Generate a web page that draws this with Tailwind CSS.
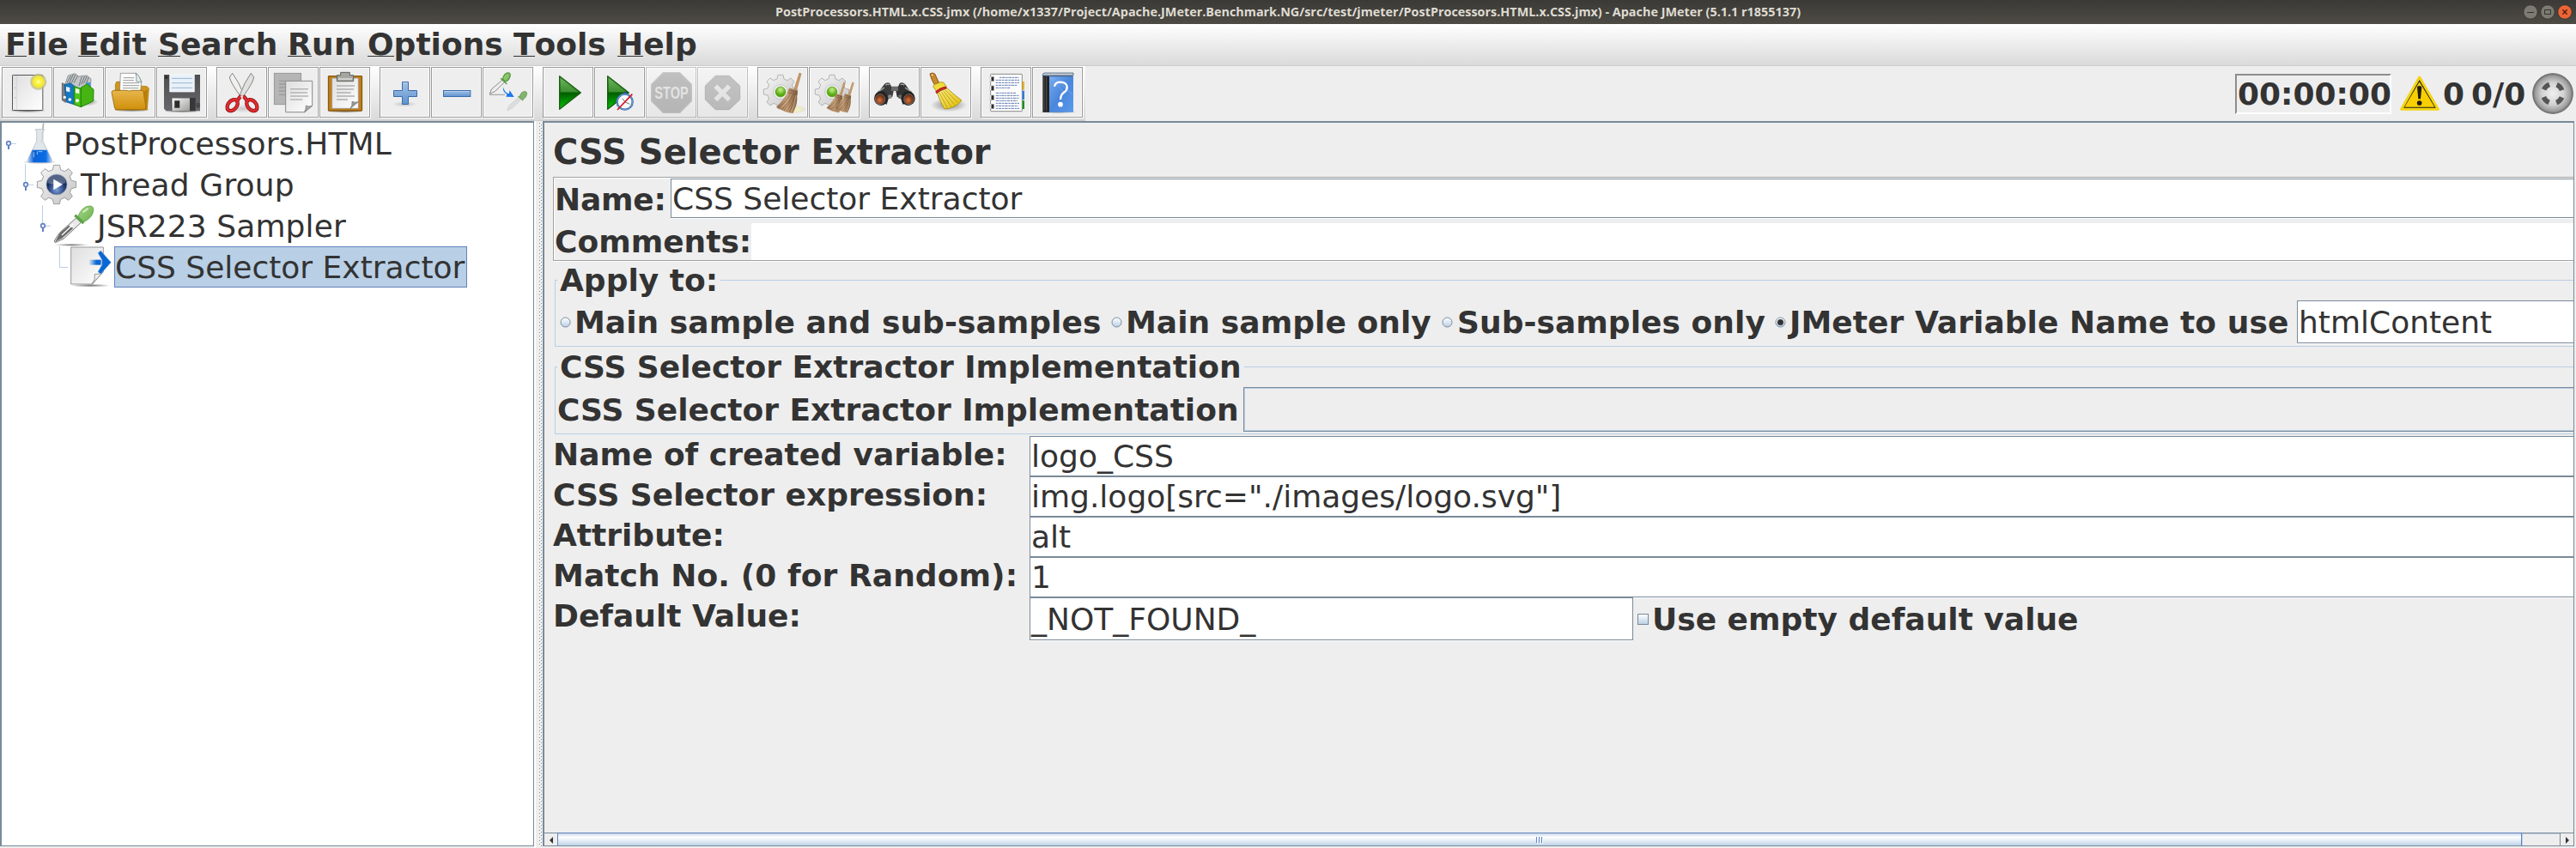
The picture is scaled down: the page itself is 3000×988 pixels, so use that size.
<!DOCTYPE html>
<html lang="en">
<head>
<meta charset="utf-8">
<title>PostProcessors.HTML.x.CSS.jmx - Apache JMeter (5.1.1 r1855137)</title>
<script src="https://cdn.jsdelivr.net/npm/@tailwindcss/browser@4"></script>
</head>
<body class="w-[3000px] h-[988px] overflow-hidden bg-white font-['DejaVu_Sans',sans-serif] text-[36px] leading-[42px] text-[#333333] whitespace-nowrap flex flex-col">
<svg width="0" height="0" class="absolute">
  <defs>
    <linearGradient id="paper" x1="0" y1="0" x2="1" y2="1"><stop offset="0" stop-color="#dedede"/><stop offset="1" stop-color="#fff"/></linearGradient>
    <linearGradient id="folder" x1="0" y1="0" x2="0" y2="1"><stop offset="0" stop-color="#e8b64c"/><stop offset="1" stop-color="#d0900a"/></linearGradient>
    <linearGradient id="floppy" x1="0" y1="0" x2="0" y2="1"><stop offset="0" stop-color="#4d4d4f"/><stop offset="1" stop-color="#68686c"/></linearGradient>
    <linearGradient id="blue" x1="0" y1="0" x2="0" y2="1"><stop offset="0" stop-color="#a5c3e6"/><stop offset="1" stop-color="#5d92d0"/></linearGradient>
    <linearGradient id="play" x1="0" y1="0" x2="0" y2="1"><stop offset="0" stop-color="#5fae4c"/><stop offset=".48" stop-color="#1f7d12"/><stop offset=".5" stop-color="#015c00"/><stop offset="1" stop-color="#00c400"/></linearGradient>
    <linearGradient id="straw" x1="0" y1="0" x2="1" y2="0"><stop offset="0" stop-color="#8d6a4a"/><stop offset=".5" stop-color="#c9a27c"/><stop offset="1" stop-color="#80603f"/></linearGradient>
    <linearGradient id="gear" x1="0" y1="0" x2="1" y2="1"><stop offset="0" stop-color="#f6f6f6"/><stop offset="1" stop-color="#c4c4c4"/></linearGradient>
    <linearGradient id="yellow" x1="0" y1="0" x2="1" y2="1"><stop offset="0" stop-color="#fbf08a"/><stop offset="1" stop-color="#e0b800"/></linearGradient>
    <linearGradient id="metal" x1="0" y1="0" x2="1" y2="1"><stop offset="0" stop-color="#fafafa"/><stop offset="1" stop-color="#9c9c98"/></linearGradient>
    <linearGradient id="liquid" x1="0" y1="0" x2="1" y2="0"><stop offset="0" stop-color="#b4d0f4"/><stop offset=".25" stop-color="#0b62d6"/><stop offset=".75" stop-color="#0a6ce6"/><stop offset="1" stop-color="#b4d0f4"/></linearGradient>
    <linearGradient id="help" x1="0" y1="0" x2="1" y2="1"><stop offset="0" stop-color="#78abee"/><stop offset=".5" stop-color="#4a86dc"/><stop offset="1" stop-color="#5b9bea"/></linearGradient>
    <linearGradient id="arrow" x1="0" y1="0" x2="1" y2="0"><stop offset="0" stop-color="#0a68d4" stop-opacity=".05"/><stop offset=".6" stop-color="#0a68d4"/></linearGradient>
    <linearGradient id="radio" x1="0" y1="0" x2="0" y2="1"><stop offset="0" stop-color="#fff"/><stop offset="1" stop-color="#b8cfe5"/></linearGradient>
    <linearGradient id="green" x1="0" y1="0" x2="1" y2="1"><stop offset="0" stop-color="#a8d68c"/><stop offset="1" stop-color="#6ab04c"/></linearGradient>
    <radialGradient id="sun"><stop offset="0" stop-color="#fffeb0"/><stop offset=".35" stop-color="#fbf230"/><stop offset=".6" stop-color="#efe640"/><stop offset=".85" stop-color="#b5b080" stop-opacity=".7"/><stop offset="1" stop-color="#cccccc" stop-opacity="0"/></radialGradient>
    <radialGradient id="shade"><stop offset="0" stop-color="#000" stop-opacity=".55"/><stop offset="1" stop-color="#000" stop-opacity="0"/></radialGradient>
    <radialGradient id="led" cx=".5" cy=".3"><stop offset="0" stop-color="#c8f08c"/><stop offset="1" stop-color="#55aa0e"/></radialGradient>
    <radialGradient id="lens" cx=".45" cy=".6"><stop offset="0" stop-color="#d8773f"/><stop offset="1" stop-color="#6b2c10"/></radialGradient>
    <radialGradient id="navy" cx=".5" cy=".75"><stop offset="0" stop-color="#7ea0da"/><stop offset=".6" stop-color="#3a5690"/><stop offset="1" stop-color="#122a5a"/></radialGradient>
    <radialGradient id="ball"><stop offset="0" stop-color="#f0f0f0"/><stop offset=".55" stop-color="#d2d2d2"/><stop offset=".88" stop-color="#9c9c9c"/><stop offset="1" stop-color="#6a6a6a"/></radialGradient>
    <path id="cog" d="M-9-59 L9-59 L12-45 Q17-43 24-40 L36-48 L48-36 L40-24 Q43-18 45-12 L59-9 L59 9 L45 12 Q43 18 40 24 L48 36 L36 48 L24 40 Q18 43 12 45 L9 59 L-9 59 L-12 45 Q-18 43 -24 40 L-36 48 L-48 36 L-40 24 Q-43 18 -45 12 L-59 9 L-59-9 L-45-12 Q-43-18 -40-24 L-48-36 L-36-48 L-24-40 Q-18-43 -12-45 Z"/>
    <g id="besom">
      <path d="M303 45 L309 48 L293 104 L285 101 Z" fill="#d19a66" stroke="#8e6238" stroke-width="1.5"/>
      <path d="M268 97 L297 107 Q294 120 295 138 Q294 160 280 186 Q248 182 222 164 Q252 138 268 97 Z" fill="url(#straw)"/>
      <path d="M265 104 L296 114 M262 112 L295 121" stroke="#6d4c30" stroke-width="2"/>
      <path d="M272 118 Q256 148 232 166 M280 120 Q268 156 250 176 M288 121 Q280 160 268 182 M277 120 Q266 150 242 172 M285 120 Q276 158 258 180" stroke="#7b5a3b" stroke-width="2" fill="none"/>
      <path d="M275 120 Q262 150 238 166 M290 124 Q286 160 274 184" stroke="#e2c19b" stroke-width="1.5" fill="none"/>
    </g>
    <pattern id="bumps" width="4" height="4" patternUnits="userSpaceOnUse"><path d="M0 0h1v1h-1zM2 2h1v1h-1z" fill="#7a8a99"/><path d="M1 1h1v1h-1zM3 3h1v1h-1z" fill="#fff"/></pattern>
  </defs>
</svg>

<!-- Window title bar -->
<header class="h-[28px] shrink-0 bg-linear-to-b from-[#3b3a36] to-[#4d4b44] flex items-center relative">
  <div class="w-full text-center font-['Open_Sans',sans-serif] font-bold text-[14.4px] leading-[28px] text-[#dfdbd2]">PostProcessors.HTML.x.CSS.jmx (/home/x1337/Project/Apache.JMeter.Benchmark.NG/src/test/jmeter/PostProcessors.HTML.x.CSS.jmx) - Apache JMeter (5.1.1 r1855137)</div>
  <svg class="absolute left-[2936px] top-0" width="64" height="28" viewBox="1128 0 192 84">
    <g stroke="#2c2b28" stroke-width="2"><circle cx="1161" cy="42" r="24.500" fill="#7c7a72"/><circle cx="1221" cy="42" r="24.500" fill="#7c7a72"/><circle cx="1281" cy="42" r="24.500" fill="#ee6436"/></g>
    <g fill="none" stroke="#32312d" stroke-width="3"><path d="M1149 43.500h24M1210.500 34.500h21v15h-21z"/><path stroke="#4a2010" stroke-width="4" d="M1273 34l16 16M1289 34l-16 16"/></g>
  </svg>
</header>

<!-- Menu bar -->
<nav class="h-[49px] shrink-0 bg-linear-to-b from-white to-[#dadada] border-b border-[#cccccc] font-bold flex pl-[6px] pt-[3px]">
  <div class="w-[85px]"><span class="inline-block h-[35px] border-b border-[#333]">F</span>ile</div>
  <div class="w-[93px]"><span class="inline-block h-[35px] border-b border-[#333]">E</span>dit</div>
  <div class="w-[151px]"><span class="inline-block h-[35px] border-b border-[#333]">S</span>earch</div>
  <div class="w-[93px] tracking-[0.3px]"><span class="inline-block h-[35px] border-b border-[#333]">R</span>un</div>
  <div class="w-[170px]"><span class="inline-block h-[35px] border-b border-[#333]">O</span>ptions</div>
  <div class="w-[121px]"><span class="inline-block h-[35px] border-b border-[#333]">T</span>ools</div>
  <div><span class="inline-block h-[35px] border-b border-[#333]">H</span>elp</div>
</nav>

<!-- Tool bar -->
<section class="h-[64px] shrink-0 bg-[#eeeeee] flex justify-between">
  <div class="w-[1264px] h-[64px] pl-[2px] pt-px flex gap-[11px] bg-linear-to-b from-white to-[#dadada] border-b border-[#cccccc] [&_svg]:w-[59px] [&_svg]:h-[59px] [&_svg]:bg-[#eeeeee] [&_svg]:shadow-[inset_0_0_0_1px_#999,inset_0_0_0_2px_#fafafa,1px_1px_0_#fff]">
    <div class="flex gap-px">
      <svg viewBox="6 24 177 177">
        <ellipse cx="97" cy="177" rx="66" ry="7" fill="url(#shade)"/>
        <rect x="43.500" y="52.500" width="106" height="123" rx="2" fill="url(#paper)" stroke="#555" stroke-width="3"/>
        <path d="M58 54v119" stroke="#cfcfcf" stroke-width="2"/><circle cx="53" cy="97" r="2" fill="#aaa"/><circle cx="53" cy="131" r="2" fill="#aaa"/>
        <circle cx="134" cy="76" r="31" fill="url(#sun)"/>
      </svg>
      <svg viewBox="186 24 177 177">
        <ellipse cx="290" cy="146" rx="54" ry="16" fill="url(#shade)"/>
        <path d="M226 88 L238 54 L262 47 L276 58 L280 56 L304 54 L318 66 L316 96 L230 112 Z" fill="#c3c7ca" stroke="#777" stroke-width="2"/>
        <path d="M234 80l14-26M242 80l14-30M250 80l14-30M258 80l14-26M276 90l10-32M284 86l12-30M292 82l12-26M300 84l10-24" stroke="#6c7175" stroke-width="3"/>
        <path d="M302 78h14v22l-8-4z" fill="#3c9be0"/>
        <path d="M217 80l12 6v62l-12-8z" fill="#7b7f86" stroke="#444" stroke-width="2"/>
        <path d="M225 86 L246 80 L262 92 L262 156 L232 147 Z" fill="#1478c0" stroke="#0a4f88" stroke-width="2"/>
        <path d="M259 92 L283 100 L283 164 L259 155 Z" fill="#4fc21c" stroke="#1d8500" stroke-width="3"/>
        <path d="M283 96 L304 84 L327 103 L326 143 L283 164 Z" fill="#46b514" stroke="#1d8500" stroke-width="3"/>
        <path d="M264 99l13 3v16l-13-3zM231 93l13 3v16l-13-3z" fill="#fff" opacity=".9"/><circle cx="270" cy="142" r="6" fill="#fff"/><circle cx="244" cy="138" r="5.500" fill="#fff"/><circle cx="226" cy="130" r="5" fill="#fff"/>
      </svg>
      <svg viewBox="366 24 177 177">
        <ellipse cx="460" cy="174" rx="66" ry="8" fill="url(#shade)"/>
        <path d="M403 86l4-10 14 0 8 10 84 6 7 6-6 76h-110z" fill="#cf961a" stroke="#a06a00" stroke-width="2"/>
        <path d="M421 46h56l17 28-4 46h-72z" fill="#fcfcfc" stroke="#777" stroke-width="2"/><path d="M474 46q4 14 2 28l18 4q-6-24-20-32z" fill="#e4ecee" stroke="#5a7378" stroke-width="2"/>
        <path d="M431 62h38M430 71h38M429 80h57M429 89h57M429 98h55" stroke="#6a6a6a" stroke-width="2"/>
        <path d="M390 112q2-6 8-6h44q10 4 20 0h34q8 0 6 9l8 50q0 8-8 8h-94q-6 0-8-8z" fill="url(#folder)" stroke="#94690a" stroke-width="2.500"/>
        <path d="M500 114l14-10-4 66" fill="#b97e08" stroke="#94690a" stroke-width="1"/>
      </svg>
      <svg viewBox="546 24 177 177">
        <ellipse cx="637" cy="178" rx="66" ry="7" fill="url(#shade)"/>
        <path d="M573 51h126v127h-118l-8-8z" fill="url(#floppy)"/>
        <path d="M593 51h86v60h-86z" fill="#e9f1f9" stroke="#fff" stroke-width="2"/><path d="M600 64h72M600 80h72M600 97h72" stroke="#8aa9cc" stroke-width="2.500"/><rect x="576" y="56" width="10" height="9" fill="#2b2b2b"/>
        <rect x="599" y="132" width="84" height="46" fill="#38383a"/><rect x="601" y="133" width="62" height="45" fill="url(#metal)"/><rect x="609.500" y="141.500" width="18" height="26" fill="#2c2c2c" stroke="#888"/><ellipse cx="692" cy="158" rx="6" ry="9" fill="#4a4a4c" stroke="#333"/>
      </svg>
    </div>
    <div class="flex gap-px">
      <svg viewBox="756 24 177 177">
        <ellipse cx="848" cy="170" rx="44" ry="14" fill="url(#shade)" opacity=".3"/>
        <path d="M812 46 L802 60 Q806 80 840 126 L852 122 Q836 78 812 46Z" fill="#f0f0ee" stroke="#858585" stroke-width="3"/>
        <path d="M877 46 L887 60 Q884 80 850 126 L838 122 Q852 80 877 46Z" fill="#e0e0de" stroke="#858585" stroke-width="3"/>
        <g fill="none" stroke="#8a0f12" stroke-width="13"><ellipse cx="812" cy="158" rx="15" ry="22" transform="rotate(40 812 158)"/><ellipse cx="880" cy="158" rx="15" ry="22" transform="rotate(-40 880 158)"/><path d="M828 142l14-17M864 142l-14-17"/></g>
        <g fill="none" stroke="#e02a2e" stroke-width="8.500"><ellipse cx="812" cy="158" rx="15" ry="22" transform="rotate(40 812 158)"/><ellipse cx="880" cy="158" rx="15" ry="22" transform="rotate(-40 880 158)"/><path d="M828 142l14-17M864 142l-14-17"/></g>
        <circle cx="845" cy="128" r="4" fill="#eee"/>
      </svg>
      <svg viewBox="936 24 177 177">
        <rect x="958" y="46" width="94" height="109" fill="#b5b5b5" stroke="#8e8e8e" stroke-width="2.500"/><path d="M975 73h22M975 84h22M975 96h22M975 108h22M975 121h22" stroke="#9a9a9a" stroke-width="4"/>
        <path d="M998 73h93v86l-26 23h-67z" fill="url(#paper)" stroke="#8a8a8a" stroke-width="3"/><path d="M1014 101h63M1014 114h60M1014 126h63M1014 138h43" stroke="#b4b4b4" stroke-width="4.500"/>
        <path d="M1091 160q-12 4-22-1q0 14-6 23z" fill="#a8a8a8" stroke="#777" stroke-width="2"/>
      </svg>
      <svg viewBox="1116 24 177 177">
        <ellipse cx="1206" cy="179" rx="64" ry="6" fill="url(#shade)"/>
        <rect x="1147.500" y="56" width="117" height="121" rx="2" fill="#c07f1c" stroke="#8b5a10" stroke-width="4"/>
        <path d="M1160 63h92v106h-92z" fill="url(#paper)" stroke="#999" stroke-width="2.500"/>
        <path d="M1176 90h63M1176 102h60M1176 114h50M1176 126h63M1176 138h39" stroke="#b0b0b0" stroke-width="4.500"/>
        <path d="M1252 146q-12 4-22-1q2 14-6 24z" fill="#999" stroke="#666" stroke-width="2"/>
        <path d="M1177 53h13v-10h32v10h13v21h-58z" fill="#a5a6a1" stroke="#5f605b" stroke-width="3"/><path d="M1182 66h48" stroke="#d8d8d4" stroke-width="5"/>
      </svg>
    </div>
    <div class="flex gap-px">
      <svg viewBox="126 24 177 177">
        <ellipse cx="214" cy="154" rx="44" ry="10" fill="url(#shade)" opacity=".35"/>
        <path d="M205.500 76.500h21v30h30v21h-30v27h-21v-27h-30v-21h30z" fill="url(#blue)" stroke="#3a6cab" stroke-width="3"/><path d="M208.500 79.500h15" stroke="#cfe0f4" stroke-width="2"/>
      </svg>
      <svg viewBox="306 24 177 177"><rect x="349.500" y="106.500" width="94" height="21" fill="url(#blue)" stroke="#3a6cab" stroke-width="3"/><path d="M352 109.500h88" stroke="#bcd3ee" stroke-width="2"/></svg>
      <svg viewBox="486 24 177 177">
        <path d="M510 121h54" stroke="#999" stroke-width="3"/>
        <path d="M557 68l8 7-36 35-18 8 6-16z" fill="#ececec" stroke="#777" stroke-width="2.500"/><path d="M549 64l22 20M556 66q6-22 20-21q9 2 6 12q-5 16-17 18z" fill="url(#green)" stroke="#5a9a44" stroke-width="4"/>
        <path d="M558 94q4 20 20 24l3-12 15 23-28-1 3-9q-16-6-13-25z" fill="#1c78ee"/>
        <path d="M612 130l8 8-28 28-20 10 7-16z" fill="#dedede" stroke="#c4c4c4" stroke-width="2"/><path d="M610 126l18 16M616 128q6-18 18-18q9 2 5 12q-5 12-15 15z" fill="#82b66c" stroke="#76a862" stroke-width="4"/>
      </svg>
    </div>
    <div class="flex gap-px">
      <svg viewBox="696 24 177 177"><path d="M755 56L829 114L755 172Z" fill="url(#play)" stroke="#1a5c12" stroke-width="4" stroke-linejoin="round"/><path d="M759 64v48h62z" fill="#fff" opacity=".13"/></svg>
      <svg viewBox="876 24 177 177"><path d="M923 56L997 114L923 172Z" fill="url(#play)" stroke="#1a5c12" stroke-width="4" stroke-linejoin="round"/><path d="M927 64v48h62z" fill="#fff" opacity=".13"/>
        <rect x="978" y="111" width="12" height="8" fill="#2d4a7a"/><circle cx="983" cy="146" r="27" fill="#f6f8fb" stroke="#3a6fae" stroke-width="7"/><circle cx="983" cy="146" r="27" fill="none" stroke="#6b9bd2" stroke-width="3"/><path d="M974 134l10 12 16 8" stroke="#555" stroke-width="2.500" fill="none"/><path d="M957 174L1009 119" stroke="#d8141a" stroke-width="5"/></svg>
      <svg viewBox="1056 24 177 177" class="opacity-60"><path d="M1117 44h58l41 41v58l-41 41h-58l-41-41v-58z" fill="#999" stroke="#a8a8a8" stroke-width="4"/><text x="1146" y="136" text-anchor="middle" textLength="118" lengthAdjust="spacingAndGlyphs" font-family="Liberation Sans, sans-serif" font-weight="bold" font-size="62" fill="#dcdcdc">STOP</text></svg>
      <svg viewBox="-54 24 177 177" class="opacity-60"><path d="M10 55h48l37 35v48l-37 35h-48l-36-35v-48z" fill="#a0a0a0" stroke="#8e8e8e" stroke-width="3"/><path d="M10 91l48 48M58 91l-48 48" stroke="#e0e0e0" stroke-width="16"/></svg>
    </div>
    <div class="flex gap-px">
      <svg viewBox="156 24 177 177"><ellipse cx="285" cy="172" rx="44" ry="14" fill="url(#sun)" opacity=".25"/><use href="#cog" transform="translate(237 111)" fill="url(#gear)" stroke="#aaa" stroke-width="2.500"/><circle cx="237" cy="111" r="25" fill="#f3f3f3" stroke="#b5b5b5" stroke-width="2"/><circle cx="237" cy="111" r="18" fill="url(#led)" stroke="#5a9a28" stroke-width="2"/><use href="#besom"/></svg>
      <svg viewBox="336 24 177 177"><use href="#cog" transform="translate(417 111)" fill="url(#gear)" stroke="#aaa" stroke-width="2.500"/><circle cx="417" cy="111" r="25" fill="#f3f3f3" stroke="#b5b5b5" stroke-width="2"/><circle cx="417" cy="111" r="18" fill="url(#led)" stroke="#5a9a28" stroke-width="2"/><use href="#besom" transform="translate(231 44) scale(.75)"/><use href="#besom" transform="translate(261 44) scale(.75)"/></svg>
    </div>
    <div class="flex gap-px">
      <svg viewBox="546 24 177 177">
        <path d="M600 84q8-8 18-4l14 28-4 20-14 8-6 20-42-26z" fill="#3c3c3c"/><path d="M672 84q-8-8-18-4l-14 28 4 20 14 8 6 20 42-26z" fill="#333"/>
        <path d="M624 92h24v16h-24z" fill="#6b6b6b"/><path d="M604 88q8-6 14-2M656 86q8-4 14 2M576 112l24-16M696 112l-24-16" stroke="#aaa" stroke-width="4" fill="none"/>
        <circle cx="619" cy="128" r="7" fill="#888"/><circle cx="655" cy="128" r="7" fill="#666"/>
        <ellipse cx="588" cy="134" rx="24" ry="25" fill="#222"/><ellipse cx="683" cy="134" rx="24" ry="25" fill="#222"/><ellipse cx="585" cy="137" rx="17" ry="18" fill="url(#lens)" stroke="#8b8b8b" stroke-width="2"/><ellipse cx="685" cy="137" rx="17" ry="18" fill="url(#lens)" stroke="#8b8b8b" stroke-width="2"/>
      </svg>
      <svg viewBox="726 24 177 177">
        <ellipse cx="825" cy="157" rx="64" ry="24" fill="url(#shade)" opacity=".8"/>
        <path d="M759 48q8-6 17 0l14 30-15 8q-10-14-16-38z" fill="#c98a2c" stroke="#8a5712" stroke-width="3"/><circle cx="767" cy="52" r="2.500" fill="#fff"/>
        <path d="M770 92q2-8 14-10q14-8 22-4l10 14q-18 4-32 20z" fill="#f0dc3c" stroke="#a58c10" stroke-width="2.500"/>
        <path d="M784 114l34-17q20 20 52 44q-22 28-60 30q-14-22-26-57z" fill="url(#yellow)" stroke="#a58c10" stroke-width="2.500"/>
        <path d="M792 114l28 54M800 112l34 52M806 108l40 50M812 104l46 46" stroke="#b89a10" stroke-width="2.500"/>
        <path d="M779 110q14-14 36-17l2 6q-22 4-34 18z" fill="#d4202a" stroke="#8c0d16" stroke-width="2"/>
      </svg>
    </div>
    <div class="flex gap-px">
      <svg viewBox="936 24 177 177">
        <rect x="1078" y="75" width="11" height="29" fill="#f0b414"/><rect x="1078" y="107" width="11" height="31" fill="#2a7ae8"/><rect x="1078" y="141" width="11" height="30" fill="#149a14"/>
        <rect x="971" y="49" width="110" height="130" rx="2" fill="#fdfdfd" stroke="#8a8a8a" stroke-width="3"/>
        <g fill="none" stroke="#5f7ab0" stroke-width="3"><path stroke-dasharray="7 2 11 2" d="M1002 61h68M989 70h82M989 79h82M989 88h76"/><path stroke-dasharray="10 2 6 2" d="M989 97h52M989 115h70M989 124h82M989 133h82M989 142h76"/><path stroke-dasharray="7 2 11 2" d="M989 151h82M989 160h78M989 169h82"/></g>
        <g fill="#2a2a2a" stroke="#aaa" stroke-width="2"><rect x="969" y="58" width="14" height="16"/><rect x="969" y="90" width="14" height="16"/><rect x="969" y="123" width="14" height="16"/><rect x="969" y="154" width="14" height="16"/></g><path d="M971 58v16M971 90v16M971 123v16M971 154v16" stroke="#eee" stroke-width="5"/>
      </svg>
      <svg viewBox="1116 24 177 177">
        <ellipse cx="1206" cy="181" rx="68" ry="5" fill="url(#shade)"/>
        <path d="M1153 54l24 3v125h-24z" fill="#222"/><path d="M1158 58v118M1166 58v118" stroke="#555" stroke-width="3"/>
        <path d="M1152 52q2-7 8-7h100v9h-104z" fill="#c8ccd2" stroke="#24426e" stroke-width="2"/><path d="M1176 57h84v125h-84z" fill="url(#help)"/>
        <path d="M1156 56h102" stroke="#24426e" stroke-width="2.500"/><path d="M1178 58l54 60M1186 58l76 66" stroke="#8fbaf2" stroke-width="1.500"/>
        <path d="M1194 92q3-15 21-15q22 1 23 18q0 11-11 18q-11 7-12 25" fill="none" stroke="#fff" stroke-width="7"/><circle cx="1215" cy="155" r="8.500" fill="#fff"/>
      </svg>
    </div>
  </div>
  <div class="flex font-bold pr-[3px] pt-[8px] [&>*]:shrink-0">
    <div class="w-[182px] h-[47px] mt-px border-2 border-t-[#8c8c8c] border-l-[#8c8c8c] border-r-white border-b-white pl-[1px] pt-px">00:00:00</div>
    <svg class="w-[48px] h-[48px] ml-[9px]" viewBox="700 255 144 144"><path d="M771 270L836 382H708Z" fill="#1d1d1b" stroke="#f4d414" stroke-width="9" stroke-linejoin="round"/><path d="M771 286L824 374H719Z" fill="#f9cf00"/><path d="M763 305q0-5 8-5t8 5l-4 41h-8z" fill="#1d1d1b"/><circle cx="771" cy="360" r="8.500" fill="#1d1d1b"/></svg>
    <div class="ml-[3px] mt-[4px] w-[33px]">0</div>
    <div class="mt-[4px] w-[71px]">0/0</div>
    <svg class="w-[48px] h-[48px]" viewBox="1167 255 144 144"><circle cx="1239" cy="327" r="70" fill="url(#ball)" stroke="#6e6e6e" stroke-width="3"/><circle cx="1239" cy="327" r="34" fill="none" stroke="#555" stroke-width="17" stroke-dasharray="27 26.400" stroke-dashoffset="-13.200"/></svg>
  </div>
</section>

<main class="h-[847px] shrink-0 flex bg-[#eeeeee]">
  <!-- Test plan tree -->
  <aside class="w-[622px] h-[845px] shrink-0 bg-white border-t-2 border-l-2 border-r border-b border-[#7a8a99] flex flex-col [&>div]:h-[48px] [&>div]:flex [&>div]:items-center">
    <div><svg class="w-[72px] h-[48px]" viewBox="6 429 216 144">
      <path d="M38 502h19" stroke="#b8cfe5" stroke-width="3"/><circle cx="30" cy="501" r="7" fill="#fff" stroke="#6382bf" stroke-width="5"/><path d="M30 507v15" stroke="#6382bf" stroke-width="6"/>
      <ellipse cx="138" cy="566" rx="60" ry="7" fill="url(#shade)"/><path d="M152 430l-8 70" stroke="#b0b0b0" stroke-width="5"/>
      <path d="M124 452h30v4l-4 4v34l30 62q4 12-8 13h-66q-12-1-8-13l30-62v-34l-4-4z" fill="#dae2e6" fill-opacity=".85" stroke="#b4bec4" stroke-width="2.500"/><path d="M112 524h52l16 33q3 11-8 11h-66q-11 0-8-11z" fill="url(#liquid)"/><path d="M118 532v18M130 530v10M134 530h14" stroke="#9cc4f6" stroke-width="3"/>
    </svg><span class="pt-[2px] tracking-[0.15px]">PostProcessors.HTML</span></div>
    <div><svg class="w-[91px] h-[48px]" viewBox="6 573 273 144">
      <path d="M88.500 573v64M98 646h19" stroke="#b8cfe5" stroke-width="3"/><circle cx="90" cy="645" r="7" fill="#fff" stroke="#6382bf" stroke-width="5"/><path d="M90 651v15" stroke="#6382bf" stroke-width="6"/>
      <use href="#cog" transform="translate(198 645) scale(1.15)" fill="url(#gear)" stroke="#999" stroke-width="2.500"/><circle cx="198" cy="645" r="36" fill="url(#navy)" stroke="#98a2b4" stroke-width="2"/><path d="M187 626l32 19-32 19z" fill="#fff"/><path d="M166 640a32 32 0 0 1 64 0q-32 10-64 0z" fill="#fff" opacity=".28"/>
    </svg><span class="pt-[2px] pl-px tracking-[0.15px]">Thread Group</span></div>
    <div><svg class="w-[111px] h-[48px]" viewBox="6 717 333 144">
      <path d="M148.500 717v64M158 790h19" stroke="#b8cfe5" stroke-width="3"/><circle cx="150" cy="789" r="7" fill="#fff" stroke="#6382bf" stroke-width="5"/><path d="M150 795v15" stroke="#6382bf" stroke-width="6"/>
      <ellipse cx="250" cy="856" rx="62" ry="5" fill="url(#shade)"/>
      <path d="M266 762l17 16-60 56-30 14q-6-4-1-10l16-24z" fill="#e9e9e9" stroke="#777" stroke-width="3"/><path d="M240 788l16 10-38 34-26 14 18-32z" fill="#6a6a68"/><path d="M256 784l-40 38" stroke="#fff" stroke-width="4"/>
      <path d="M272 758q14-36 40-38q18 0 14 18q-4 24-34 38z" fill="url(#green)" stroke="#6aae54" stroke-width="3"/><path d="M262 752l30 28" stroke="#5da548" stroke-width="10"/><path d="M290 742l18-14" stroke="#d4f0c0" stroke-width="6"/>
    </svg><span class="pt-[2px] tracking-[0.1px]">JSR223 Sampler</span></div>
    <div><svg class="w-[131px] h-[48px]" viewBox="6 861 393 144">
      <path d="M208.500 861v73.500h29" fill="none" stroke="#b8cfe5" stroke-width="3"/><ellipse cx="316" cy="998" rx="70" ry="6" fill="url(#shade)"/>
      <path d="M248 864h113v86l-38 43h-75z" fill="url(#paper)" stroke="#999" stroke-width="3"/><path d="M361 950q-18 12-30 8q4 18-10 35z" fill="#eee" stroke="#888" stroke-width="2.500"/>
      <path d="M311 908h42v18h-42z" fill="url(#arrow)"/><path d="M342 884l10-8 36 41-36 41-10-8 14-24v-18z" fill="#0a68d4" stroke="#a5b8cc" stroke-width="1.500"/>
    </svg><span class="h-[48px] w-[411px] leading-[48px] bg-[#b8cfe5] border border-[#6382bf]">CSS Selector Extractor</span></div>
  </aside>

  <!-- Split pane divider -->
  <div class="w-[10px] shrink-0 pl-[4px] border-l-2 border-white"><svg width="4" height="843" class="mt-[2px]"><rect width="4" height="843" fill="url(#bumps)"/></svg></div>

  <!-- Element editor -->
  <section class="w-[2366px] h-[845px] shrink-0 overflow-hidden border-t-2 border-l-2 border-r border-b border-[#7a8a99] flex flex-col">
    <div class="h-[827px] shrink-0 overflow-hidden pl-[10px]">
      <h1 class="font-bold text-[40px] leading-[48px] h-[63px] pt-[10px]">CSS Selector Extractor</h1>
      <div class="h-[98px] w-[2400px] border border-[#a0a0a0] shadow-[inset_1px_1px_0_#fff,0_1px_0_#fff]">
        <div class="flex pt-px pl-[1px] h-[53px]">
          <b class="w-[135px] pt-[4px] tracking-[-0.2px]">Name:</b>
          <div class="grow h-[46px] bg-white border border-[#7a8a99] shadow-[0_1px_0_#fff] pl-[1px] pt-[2px]">CSS Selector Extractor</div>
        </div>
        <div class="flex pl-[1px] h-[43px]"><b class="w-[229px] pt-px">Comments:</b><div class="grow bg-white"></div></div>
      </div>

      <fieldset class="relative w-[2400px] h-[78px] mt-[22px] ml-[2px] border border-[#b8cfe5]">
        <b class="absolute -top-[21px] left-[2px] px-[3px] bg-[#eeeeee]">Apply to:</b>
        <div class="flex font-bold h-[50px] mt-[23px] pl-[5px] [&>svg]:w-[13px] [&>svg]:h-[13px] [&>svg]:mt-[19px] [&>svg]:shrink-0 [&>span]:pt-[5px] [&>span]:tracking-[0.05px]">
          <svg viewBox="0 0 13 13"><circle cx="6.500" cy="6.500" r="5.500" fill="url(#radio)" stroke="#7a8a99"/></svg><span class="w-[629px] pl-[4px]">Main sample and sub-samples</span>
          <svg viewBox="0 0 13 13"><circle cx="6.500" cy="6.500" r="5.500" fill="url(#radio)" stroke="#7a8a99"/></svg><span class="w-[372px] pl-[4px]">Main sample only</span>
          <svg viewBox="0 0 13 13"><circle cx="6.500" cy="6.500" r="5.500" fill="url(#radio)" stroke="#7a8a99"/></svg><span class="w-[375px] pl-[5px]">Sub-samples only</span>
          <svg viewBox="0 0 13 13"><circle cx="6.500" cy="6.500" r="5.500" fill="url(#radio)" stroke="#7a8a99"/><circle cx="6.500" cy="6.500" r="3.500" fill="#333"/></svg><span class="w-[595px] pl-[4px]">JMeter Variable Name to use</span>
          <div class="grow h-[50px] font-normal bg-white border border-[#7a8a99] shadow-[0_1px_0_#fff] pl-[1px] pt-[4px]">htmlContent</div>
        </div>
      </fieldset>

      <fieldset class="relative w-[2400px] h-[79px] mt-[23px] ml-[2px] border border-[#b8cfe5] font-bold">
        <b class="absolute -top-[21px] left-[2px] px-[3px] bg-[#eeeeee]">CSS Selector Extractor Implementation</b>
        <div class="flex h-[52px] mt-[23px] pl-[2px]"><span class="w-[799px] pt-[6px]">CSS Selector Extractor Implementation</span><div class="grow border border-[#7a8a99] shadow-[inset_0_0_0_1px_#b8cfe5]"></div></div>
      </fieldset>

      <div class="grid grid-cols-[555px_1fr] w-[2400px] mt-[2px] auto-rows-[47px] [&>b]:pt-px [&>div]:h-[47px] [&>div]:bg-white [&>div]:border [&>div]:border-[#7a8a99] [&>div]:pl-[1px] [&>div]:pt-[2px] [&>div]:shadow-[0_1px_0_#fff]">
        <b>Name of created variable:</b><div>logo_CSS</div>
        <b>CSS Selector expression:</b><div>img.logo[src="./images/logo.svg"]</div>
        <b>Attribute:</b><div>alt</div>
        <b class="tracking-[0.08px]">Match No. (0 for Random):</b><div>1</div>
      </div>
      <div class="flex h-[50px]">
        <b class="w-[555px] pt-px">Default Value:</b>
        <div class="w-[703px] h-[50px] bg-white border border-[#7a8a99] shadow-[0_1px_0_#fff] pl-[1px] pt-[4px]">_NOT_FOUND_</div>
        <svg class="w-[13px] h-[13px] ml-[5px] mt-[19px]" viewBox="0 0 13 13"><rect x=".5" y=".5" width="12" height="12" fill="url(#radio)" stroke="#7a8a99"/></svg>
        <b class="pl-[4px] pt-[5px]">Use empty default value</b>
      </div>
    </div>
    <!-- Horizontal scroll bar -->
    <div class="h-[16px] shrink-0 border-t border-[#7a8a99] flex">
      <div class="w-[15px] flex items-center justify-center"><svg width="4" height="8" viewBox="0 0 4 8"><path d="M4 0v8L0 4z" fill="#333"/></svg></div>
      <div class="w-[2288px] -mt-px h-[16px] border border-b-0 border-[#6382bf] bg-linear-to-b from-[#c8d8ea] via-white via-30% to-[#b8cfe5] flex items-center justify-center"><svg width="8" height="8" viewBox="0 0 8 8"><path d="M.5 0v7M3.500 0v7M6.500 0v7" stroke="#6382bf"/><path d="M1.500 1v7M4.500 1v7M7.500 1v7" stroke="#fff"/></svg></div>
      <div class="w-[44px] border-t border-l border-[#b8cfe5]"></div>
      <div class="grow border-l border-[#7a8a99] flex items-center justify-center"><svg width="4" height="8" viewBox="0 0 4 8"><path d="M0 0v8L4 4z" fill="#333"/></svg></div>
    </div>
  </section>
</main>
</body>
</html>
